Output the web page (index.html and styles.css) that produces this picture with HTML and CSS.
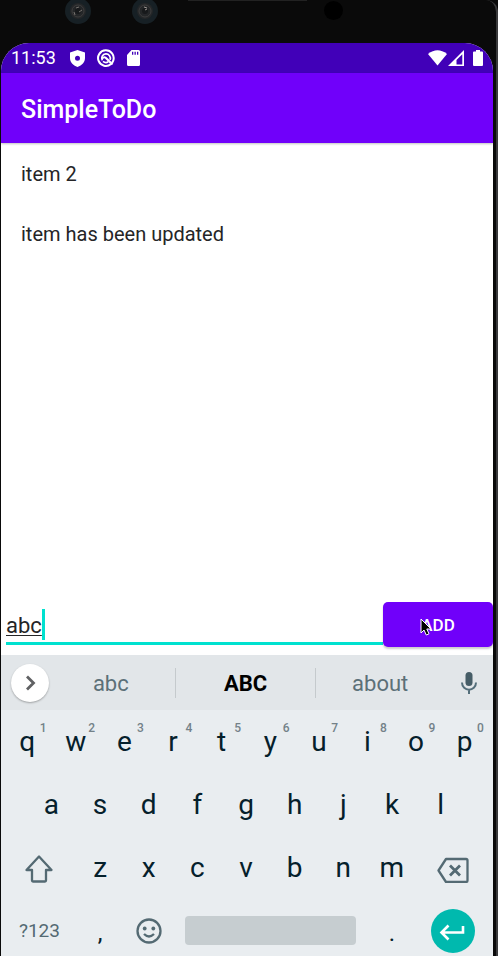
FILE: index.html
```html
<!DOCTYPE html>
<html lang="en">
<head>
<meta charset="utf-8">
<meta name="viewport" content="width=device-width, initial-scale=1">
<title>SimpleToDo</title>
<link rel="stylesheet" href="styles.css">
</head>
<body>
<div class="phone">
  <div class="bezel" aria-hidden="true">
    <svg class="lens lens-a" viewBox="0 0 26 26"><circle cx="13" cy="13" r="13" fill="#172025"/><circle cx="13" cy="13" r="8" fill="#242628"/><circle cx="13" cy="13" r="6" fill="none" stroke="#3d3d3d"/><circle cx="13" cy="13" r="3" fill="#17191b"/><path d="M11 10l3-1M14 14l3-2M9 14l1 3" stroke="#77736f" stroke-width="1"/></svg>
    <svg class="lens lens-b" viewBox="0 0 26 26"><circle cx="13" cy="13" r="13" fill="#172025"/><circle cx="13" cy="13" r="8" fill="#242628"/><circle cx="13" cy="13" r="6" fill="none" stroke="#3d3d3d"/><circle cx="13" cy="13" r="3" fill="#17191b"/><path d="M12 9l3 1M13 12l2-1" stroke="#9a9490" stroke-width="1"/></svg>
    <span class="speaker"></span>
    <span class="camera"></span>
  </div>
  <div class="screen">
    <div class="status">
      <span class="time">11:53</span>
      <svg class="shield" viewBox="0 0 15 17"><path fill="#fff" fill-rule="evenodd" d="M7.500 0L15 2.500V8c0 4-3 7.500-7.500 9C3 15.500 0 12 0 8V2.500zM7.500 5.800a2.500 2.500 0 1 0 0 5 2.500 2.500 0 0 0 0-5z"/></svg>
      <svg class="radar" viewBox="0 0 18 18" fill="none" stroke="#fff"><path stroke-width="2" d="M14 15A7.800 7.800 0 1 1 16.300 11.500L15 14"/><path stroke-width="1.700" d="M5.300 11.300A4.300 4.300 0 1 1 13 10.800"/><path stroke-width="2.200" d="M5 9.500Q7.500 7 9.500 9.500L15.500 15.500"/><path stroke-width="1.700" d="M6 12.300Q8.500 14.500 11.300 12.800"/></svg>
      <svg class="sd" viewBox="0 0 13 16"><path fill="#fff" fill-rule="evenodd" d="M4.500 0h7Q13 0 13 1.500v13Q13 16 11.500 16h-10Q0 16 0 14.500V5zM5 1.700v3h1.300v-3zm2.500 0v3h1.300v-3zm2.500 0v3h1.300v-3z"/></svg>
      <span class="spacer"></span>
      <svg class="wifi" viewBox="0 0 19 16"><path fill="#fff" d="M0 4Q9.500-3.500 19 4L9.500 15.500z"/></svg>
      <svg class="signal" viewBox="0 0 16 16"><path fill="#fff" fill-rule="evenodd" d="M16 0v16H0zM14.300 4.200L8.500 10v4.500h5.800z"/></svg>
      <svg class="battery" viewBox="0 0 10 16"><path fill="#fff" d="M3 0h4v1.500h2q1 0 1 1V15q0 1-1 1H1q-1 0-1-1V2.500q0-1 1-1h2z"/></svg>
    </div>
    <header class="appbar"><h1>SimpleToDo</h1></header>
    <main>
      <ul class="items">
        <li>item 2</li>
        <li>item has been updated</li>
      </ul>
      <form class="entry">
        <div class="field">
          <input type="text" value="abc" aria-label="New item" autocomplete="off" spellcheck="false">
          <span class="caret"></span>
        </div>
        <button class="add" type="button">ADD
          <svg class="pointer" viewBox="0 0 12 18" aria-hidden="true"><path d="M1 1v14l3-3 2.300 5 2.700-1.200L6.800 11H11z" fill="#000" stroke="#fff" stroke-width="1"/></svg>
        </button>
      </form>
    </main>
    <section class="keyboard" aria-label="Keyboard">
      <div class="suggest">
        <button class="more" aria-label="More"><svg viewBox="0 0 38 38" fill="none" stroke="#606163" stroke-width="2.800"><path d="M16 12.500l6.500 6.500-6.500 6.500"/></svg></button>
        <button class="word">abc</button>
        <button class="word best">ABC</button>
        <button class="word">about</button>
        <button class="mic" aria-label="Voice input"><svg viewBox="0 0 16 22"><rect x="4.500" y="0" width="7" height="14" rx="3.500" fill="#465d67"/><path d="M1 10.500C1 20 15 20 15 10.500M8 17.500V22" fill="none" stroke="#546e7a" stroke-width="2"/></svg></button>
      </div>
      <div class="row">
        <button>q<sup>1</sup></button><button>w<sup>2</sup></button><button>e<sup>3</sup></button><button>r<sup>4</sup></button><button>t<sup>5</sup></button><button>y<sup>6</sup></button><button>u<sup>7</sup></button><button>i<sup>8</sup></button><button>o<sup>9</sup></button><button>p<sup>0</sup></button>
      </div>
      <div class="row inset">
        <button>a</button><button>s</button><button>d</button><button>f</button><button>g</button><button>h</button><button>j</button><button>k</button><button>l</button>
      </div>
      <div class="row">
        <button class="wide" aria-label="Shift"><svg class="shift" viewBox="0 0 28 30" fill="none" stroke="#546a73" stroke-width="2.300" stroke-linejoin="round"><path d="M14 3.500L1.500 17H7v10.500q0 1 1 1h12q1 0 1-1V17h5.500z"/></svg></button>
        <button>z</button><button>x</button><button>c</button><button>v</button><button>b</button><button>n</button><button>m</button>
        <button class="wide" aria-label="Backspace"><svg class="erase" viewBox="0 0 32 30" fill="none" stroke="#546a73" stroke-width="2.300" stroke-linejoin="round"><path d="M9 6h20q1.500 0 1.500 1.500v20q0 1.500-1.500 1.500H9L1.500 17.500z"/><path stroke-width="2.800" d="M13 12.500l10 10M23 12.500l-10 10"/></svg></button>
      </div>
      <div class="row last">
        <button class="wide symbols">?123</button>
        <button class="mark">,</button>
        <button aria-label="Emoji"><svg class="emoji" viewBox="0 0 26 26" fill="none" stroke="#546a73" stroke-width="2.300"><circle cx="13" cy="13" r="11.500"/><path d="M8 16Q13 21 18 16"/><circle cx="8.700" cy="10.500" r="1.900" fill="#546a73" stroke="none"/><circle cx="17.300" cy="10.500" r="1.900" fill="#546a73" stroke="none"/></svg></button>
        <button class="space" aria-label="Space"><span></span></button>
        <button class="mark">.</button>
        <button class="wide" aria-label="Enter"><svg class="enter" viewBox="0 0 44 44"><circle cx="22" cy="22" r="22" fill="#00b9ae"/><path d="M32 17v6.500H11M17.500 16.500l-7 7 7 7" fill="none" stroke="#fff" stroke-width="2.600"/></svg></button>
      </div>
    </section>
  </div>
</div>
</body>
</html>
```
FILE: styles.css
```css
* { box-sizing: border-box; }

body {
  margin: 0;
  background: #0a0a0a;
  font-family: Roboto, "Liberation Sans", sans-serif;
}

button {
  border: 0;
  padding: 0;
  background: none;
  color: inherit;
  font: inherit;
}

svg { display: block; }

.phone {
  display: flex;
  flex-direction: column;
  min-height: 100vh;
  padding: 0 3px 0 1px;
  border-right: 2px solid #39393b;
  border-top-right-radius: 12px;
}

.bezel {
  position: relative;
  height: 43px;
}

.lens {
  position: absolute;
  top: -2px;
  width: 26px;
}

.lens-a { left: 64px; }
.lens-b { left: 131px; }

.speaker {
  position: absolute;
  top: 0;
  left: 187px;
  width: 119px;
  height: 1px;
  background: #222;
}

.camera {
  position: absolute;
  top: 1px;
  left: 323px;
  width: 19px;
  height: 19px;
  border-radius: 50%;
  background: #000;
}

.screen {
  display: flex;
  flex: 1;
  flex-direction: column;
  overflow: hidden;
  border-radius: 28px 28px 0 0;
  background: #fff;
}

.status {
  display: flex;
  align-items: center;
  height: 30px;
  padding: 0 10px;
  background: #4100b8;
  color: #fff;
}

.time {
  font-size: 18px;
  line-height: 30px;
}

.shield { width: 15px; margin-left: 14px; }
.radar { width: 18px; margin-left: 12px; }
.sd { width: 13px; margin-left: 12px; }
.spacer { flex: 1; }
.wifi { width: 19px; }
.signal { width: 16px; margin-left: 1px; }
.battery { width: 10px; margin-left: 9px; }

.appbar {
  z-index: 1;
  display: flex;
  align-items: center;
  height: 70px;
  padding: 3px 20px 0;
  background: #7000fa;
  box-shadow: 0 1px 2px rgba(0, 0, 0, 0.25);
  color: #fff;
}

h1 {
  margin: 0;
  font-size: 25px;
  font-weight: 500;
}

main {
  display: flex;
  flex: 1;
  flex-direction: column;
  justify-content: space-between;
}

.items {
  margin: 0;
  padding: 1px 0 0;
  list-style: none;
}

.items li {
  padding: 0 20px;
  color: #252527;
  font-size: 20px;
  line-height: 60px;
}

.entry {
  display: flex;
  align-items: flex-end;
  padding-bottom: 8px;
}

.field {
  position: relative;
  flex: 1;
  height: 43px;
  margin: 0 0 2px 5px;
  border-bottom: 3px solid #00e1cf;
}

.field input {
  width: 100%;
  height: 43px;
  padding: 4px 0 0;
  border: 0;
  outline: 0;
  background: none;
  color: #252527;
  font: 22px/26px Roboto, "Liberation Sans", sans-serif;
  text-decoration: underline;
  text-decoration-thickness: 1px;
  text-underline-offset: 2px;
}

.caret {
  position: absolute;
  top: 7px;
  left: 36px;
  width: 3px;
  height: 31px;
  background: #00e1cf;
}

.add {
  position: relative;
  width: 110px;
  height: 45px;
  border-radius: 5px;
  background: #7000fa;
  box-shadow: 0 2px 2px rgba(0, 0, 0, 0.2);
  color: #fff;
  font-size: 17px;
  font-weight: 500;
}

.pointer {
  position: absolute;
  top: 16px;
  left: 37px;
  width: 12px;
}

.keyboard {
  background: #e9edf0;
  color: #05202b;
}

.suggest {
  display: grid;
  grid-template-columns: 46px 9fr 10fr 9fr 49px;
  align-items: center;
  height: 55px;
  background: #e2e6e9;
}

.more {
  width: 38px;
  height: 38px;
  margin-left: 10px;
  border-radius: 50%;
  background: #fff;
  box-shadow: 0 1px 2px rgba(0, 0, 0, 0.3);
}

.word {
  height: 30px;
  padding-top: 3px;
  color: #5c7078;
  font-size: 22px;
  line-height: 26px;
}

.best {
  border: solid #c5cacd;
  border-width: 0 1px;
  color: #000;
  font-weight: 700;
}

.mic svg {
  width: 16px;
  margin: auto;
}

.row {
  display: flex;
  height: 63px;
  padding: 0 4px 0 2px;
}

.inset { padding: 0 28px 0 26px; }

.last {
  height: 57px;
  padding-top: 6px;
}

.row button {
  position: relative;
  display: flex;
  flex: 2 1 0;
  align-items: center;
  justify-content: center;
  font-size: 28px;
}

.row .wide { flex-grow: 3; }
.row .space { flex-grow: 8; }

.row sup {
  position: absolute;
  top: 11px;
  right: 5px;
  color: #738188;
  font-size: 12px;
  font-weight: 500;
  line-height: 14px;
}

.row .symbols {
  color: #546a73;
  font-size: 19px;
}

.row .mark {
  padding-top: 4px;
  font-size: 24px;
}

.space span {
  width: 100%;
  height: 29px;
  margin: 0 12px;
  border-radius: 4px;
  background: #c6cdd0;
}

.shift { width: 28px; }
.erase { width: 32px; }
.emoji { width: 26px; }
.enter { width: 44px; }
```
